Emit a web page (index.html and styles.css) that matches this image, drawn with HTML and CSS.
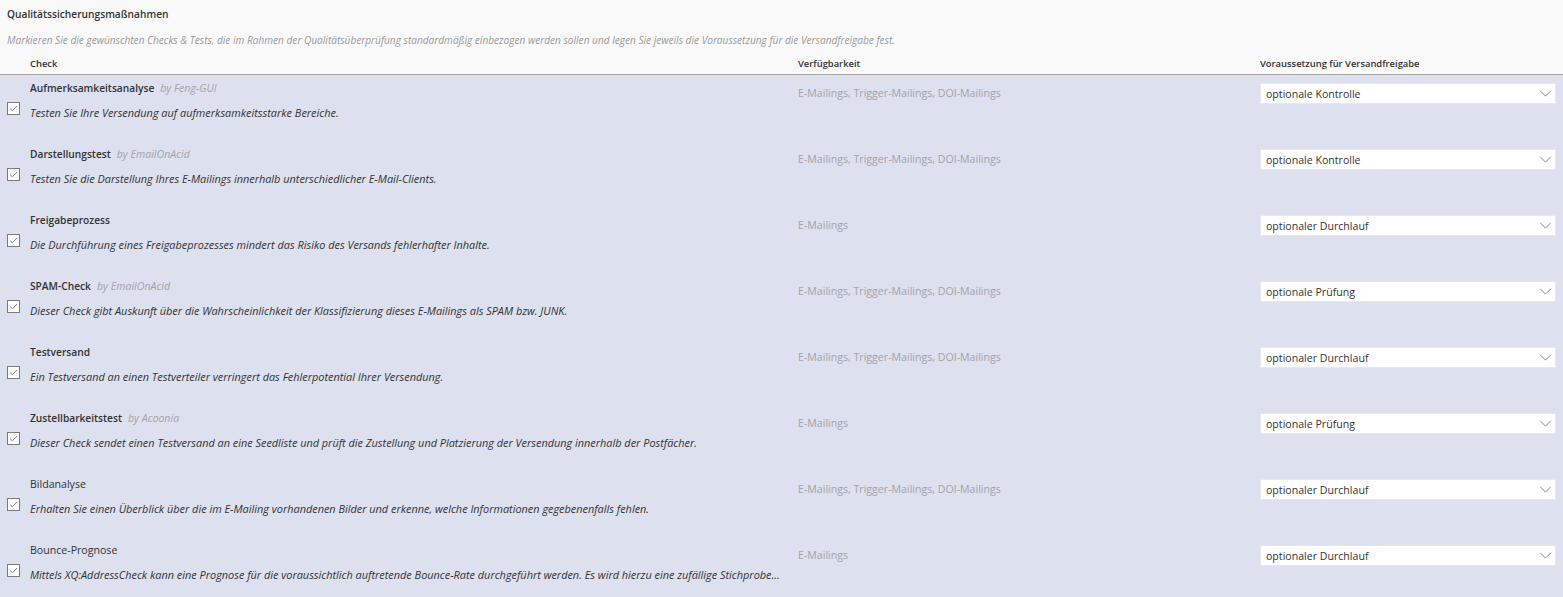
FILE: index.html
```html
<!DOCTYPE html>
<html lang="de">
<head>
<meta charset="utf-8">
<title>Qualitätssicherungsmaßnahmen</title>
<link rel="stylesheet" href="styles.css">
</head>
<body>
<div class="page">
  <h1 class="title">Qualitätssicherungsmaßnahmen</h1>
  <p class="intro">Markieren Sie die gewünschten Checks &amp; Tests, die im Rahmen der Qualitätsüberprüfung standardmäßig einbezogen werden sollen und legen Sie jeweils die Voraussetzung für die Versandfreigabe fest.</p>
  <div class="head">
    <span></span>
    <span class="th">Check</span>
    <span class="th">Verfügbarkeit</span>
    <span class="th">Voraussetzung für Versandfreigabe</span>
  </div>
  <div class="rows">
    <div class="row">
      <span class="cb"><svg viewBox="0 0 13 13"><rect x="0.5" y="0.5" width="12" height="12" fill="#fff" stroke="#7a7a7a"/><path d="M3 6.6 L5.4 8.8 L10 4" fill="none" stroke="#8a7fa8" stroke-width="1"/></svg></span>
      <div class="check"><div class="name"><b>Aufmerksamkeitsanalyse</b><i class="by">by Feng-GUI</i></div><div class="desc">Testen Sie Ihre Versendung auf aufmerksamkeitsstarke Bereiche.</div></div>
      <div class="avail">E-Mailings, Trigger-Mailings, DOI-Mailings</div>
      <div class="sel"><span>optionale Kontrolle</span><svg viewBox="0 0 14 8"><path d="M1 1 L7 7 L13 1" fill="none" stroke="#777" stroke-width="1"/></svg></div>
    </div>
    <div class="row">
      <span class="cb"><svg viewBox="0 0 13 13"><rect x="0.5" y="0.5" width="12" height="12" fill="#fff" stroke="#7a7a7a"/><path d="M3 6.6 L5.4 8.8 L10 4" fill="none" stroke="#8a7fa8" stroke-width="1"/></svg></span>
      <div class="check"><div class="name"><b>Darstellungstest</b><i class="by">by EmailOnAcid</i></div><div class="desc">Testen Sie die Darstellung Ihres E-Mailings innerhalb unterschiedlicher E-Mail-Clients.</div></div>
      <div class="avail">E-Mailings, Trigger-Mailings, DOI-Mailings</div>
      <div class="sel"><span>optionale Kontrolle</span><svg viewBox="0 0 14 8"><path d="M1 1 L7 7 L13 1" fill="none" stroke="#777" stroke-width="1"/></svg></div>
    </div>
    <div class="row">
      <span class="cb"><svg viewBox="0 0 13 13"><rect x="0.5" y="0.5" width="12" height="12" fill="#fff" stroke="#7a7a7a"/><path d="M3 6.6 L5.4 8.8 L10 4" fill="none" stroke="#8a7fa8" stroke-width="1"/></svg></span>
      <div class="check"><div class="name"><b>Freigabeprozess</b></div><div class="desc">Die Durchführung eines Freigabeprozesses mindert das Risiko des Versands fehlerhafter Inhalte.</div></div>
      <div class="avail">E-Mailings</div>
      <div class="sel"><span>optionaler Durchlauf</span><svg viewBox="0 0 14 8"><path d="M1 1 L7 7 L13 1" fill="none" stroke="#777" stroke-width="1"/></svg></div>
    </div>
    <div class="row">
      <span class="cb"><svg viewBox="0 0 13 13"><rect x="0.5" y="0.5" width="12" height="12" fill="#fff" stroke="#7a7a7a"/><path d="M3 6.6 L5.4 8.8 L10 4" fill="none" stroke="#8a7fa8" stroke-width="1"/></svg></span>
      <div class="check"><div class="name"><b>SPAM-Check</b><i class="by">by EmailOnAcid</i></div><div class="desc">Dieser Check gibt Auskunft über die Wahrscheinlichkeit der Klassifizierung dieses E-Mailings als SPAM bzw. JUNK.</div></div>
      <div class="avail">E-Mailings, Trigger-Mailings, DOI-Mailings</div>
      <div class="sel"><span>optionale Prüfung</span><svg viewBox="0 0 14 8"><path d="M1 1 L7 7 L13 1" fill="none" stroke="#777" stroke-width="1"/></svg></div>
    </div>
    <div class="row">
      <span class="cb"><svg viewBox="0 0 13 13"><rect x="0.5" y="0.5" width="12" height="12" fill="#fff" stroke="#7a7a7a"/><path d="M3 6.6 L5.4 8.8 L10 4" fill="none" stroke="#8a7fa8" stroke-width="1"/></svg></span>
      <div class="check"><div class="name"><b>Testversand</b></div><div class="desc">Ein Testversand an einen Testverteiler verringert das Fehlerpotential Ihrer Versendung.</div></div>
      <div class="avail">E-Mailings, Trigger-Mailings, DOI-Mailings</div>
      <div class="sel"><span>optionaler Durchlauf</span><svg viewBox="0 0 14 8"><path d="M1 1 L7 7 L13 1" fill="none" stroke="#777" stroke-width="1"/></svg></div>
    </div>
    <div class="row">
      <span class="cb"><svg viewBox="0 0 13 13"><rect x="0.5" y="0.5" width="12" height="12" fill="#fff" stroke="#7a7a7a"/><path d="M3 6.6 L5.4 8.8 L10 4" fill="none" stroke="#8a7fa8" stroke-width="1"/></svg></span>
      <div class="check"><div class="name"><b>Zustellbarkeitstest</b><i class="by">by Acoonia</i></div><div class="desc">Dieser Check sendet einen Testversand an eine Seedliste und prüft die Zustellung und Platzierung der Versendung innerhalb der Postfächer.</div></div>
      <div class="avail">E-Mailings</div>
      <div class="sel"><span>optionale Prüfung</span><svg viewBox="0 0 14 8"><path d="M1 1 L7 7 L13 1" fill="none" stroke="#777" stroke-width="1"/></svg></div>
    </div>
    <div class="row">
      <span class="cb"><svg viewBox="0 0 13 13"><rect x="0.5" y="0.5" width="12" height="12" fill="#fff" stroke="#7a7a7a"/><path d="M3 6.6 L5.4 8.8 L10 4" fill="none" stroke="#8a7fa8" stroke-width="1"/></svg></span>
      <div class="check"><div class="name"><span class="plain">Bildanalyse</span></div><div class="desc">Erhalten Sie einen Überblick über die im E-Mailing vorhandenen Bilder und erkenne, welche Informationen gegebenenfalls fehlen.</div></div>
      <div class="avail">E-Mailings, Trigger-Mailings, DOI-Mailings</div>
      <div class="sel"><span>optionaler Durchlauf</span><svg viewBox="0 0 14 8"><path d="M1 1 L7 7 L13 1" fill="none" stroke="#777" stroke-width="1"/></svg></div>
    </div>
    <div class="row">
      <span class="cb"><svg viewBox="0 0 13 13"><rect x="0.5" y="0.5" width="12" height="12" fill="#fff" stroke="#7a7a7a"/><path d="M3 6.6 L5.4 8.8 L10 4" fill="none" stroke="#8a7fa8" stroke-width="1"/></svg></span>
      <div class="check"><div class="name"><span class="plain">Bounce-Prognose</span></div><div class="desc">Mittels XQ:AddressCheck kann eine Prognose für die voraussichtlich auftretende Bounce-Rate durchgeführt werden. Es wird hierzu eine zufällige Stichprobe...</div></div>
      <div class="avail">E-Mailings</div>
      <div class="sel"><span>optionaler Durchlauf</span><svg viewBox="0 0 14 8"><path d="M1 1 L7 7 L13 1" fill="none" stroke="#777" stroke-width="1"/></svg></div>
    </div>
  </div>
</div>
</body>
</html>
```
FILE: styles.css
```css
html, body {
  margin: 0;
  padding: 0;
  background: #f9f9f9;
}
body {
  font-family: "Open Sans", "Noto Sans", sans-serif;
  color: #333;
  font-size: 11px;
}
.page {
  padding: 0 7px 0 0;
}
.title {
  margin: 0;
  padding: 6px 0 0 7px;
  height: 20px;
  line-height: 16px;
  font-size: 10.2px;
  font-weight: 600;
  color: #333;
}
.intro {
  margin: 0;
  padding: 7px 0 0 7px;
  line-height: 14px;
  font-size: 10.1px;
  font-style: italic;
  color: #999;
  height: 20px;
  white-space: nowrap;
}
.head,
.row {
  display: grid;
  grid-template-columns: 30px 768px 462px 1fr;
}
.head {
  height: 17px;
  padding-top: 4px;
  border-bottom: 1px solid #a6a6a6;
  margin-right: -7px;
  padding-right: 7px;
}
.th {
  font-size: 9.4px;
  font-weight: 600;
  color: #333;
  line-height: 14px;
}
.rows {
  background: #dde0ee;
  margin-right: -7px;
  padding-right: 7px;
}
.row {
  height: 66px;
  box-sizing: border-box;
}
.cb {
  align-self: center;
  padding-left: 7px;
  display: flex;
}
.cb svg {
  width: 13px;
  height: 13px;
}
.check {
  padding-top: 5px;
  min-width: 0;
}
.name {
  line-height: 16px;
  height: 16px;
}
.name b {
  font-weight: 600;
  font-size: 10.2px;
}
.name .plain {
  font-size: 10.6px;
}
.by {
  color: #a3a3a8;
  margin-left: 6px;
  font-size: 10.6px;
}
.desc {
  margin-top: 9px;
  line-height: 16px;
  font-size: 10.9px;
  font-style: italic;
  white-space: nowrap;
}
.avail {
  padding-top: 8px;
  line-height: 21px;
  font-size: 10.6px;
  color: #a3a3ab;
}
.sel {
  margin-top: 8px;
  height: 21px;
  background: #fff;
  border: 1px solid #e6e8ee;
  box-sizing: border-box;
  display: flex;
  align-items: center;
  justify-content: space-between;
  padding: 0 3px 0 5px;
  font-size: 10.6px;
  color: #333;
}
.sel svg {
  width: 13px;
  height: 7px;
}
```
